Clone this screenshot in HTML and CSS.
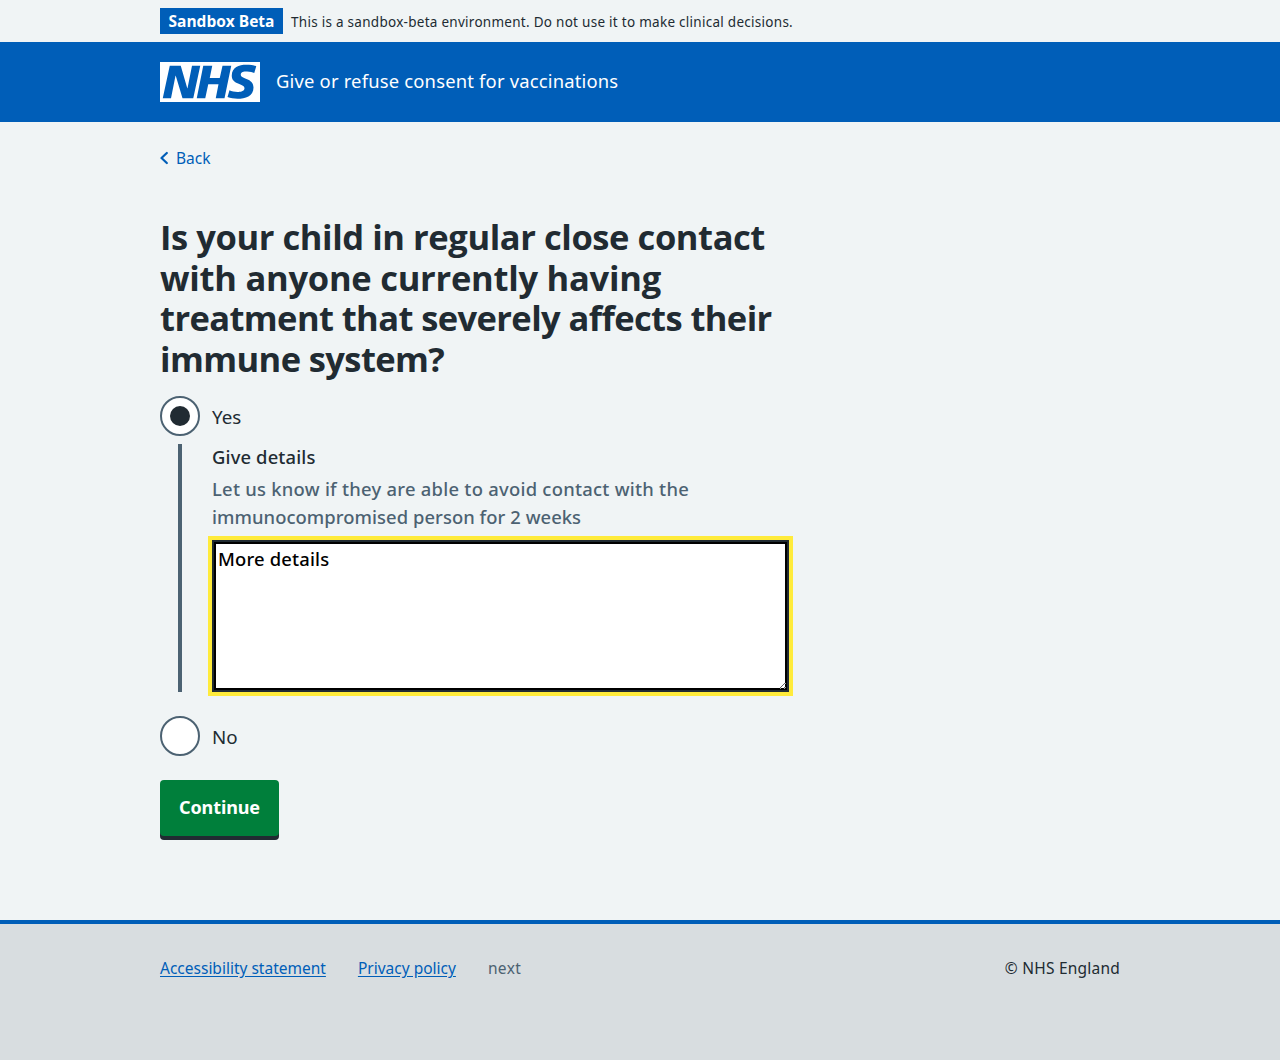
FILE: index.html
```html
<!DOCTYPE html>
<html lang="en">
<head>
<meta charset="utf-8">
<title>Give or refuse consent for vaccinations</title>
<link rel="stylesheet" href="styles.css">
</head>
<body>
<div class="environment">
  <div class="container environment-row">
    <strong class="tag">Sandbox Beta</strong>
    <span class="environment-text">This is a sandbox-beta environment. Do not use it to make clinical decisions.</span>
  </div>
</div>
<header class="header">
  <div class="container header-row">
    <svg class="logo" viewBox="0 0 40 16" role="img" aria-label="NHS"><path fill="#fff" d="M0 0h40v16H0z"/><path fill="#005eb8" d="M3.9 1.5h4.4l2.6 9h.1l1.8-9h3.3l-2.8 13H9l-2.7-9h-.1l-1.8 9H1.1M17.3 1.5h3.6l-1 4.9h4L25 1.5h3.5l-2.7 13h-3.5l1.1-5.6h-4.1l-1.2 5.6h-3.4M37.7 4.4c-.7-.3-1.6-.6-2.9-.6-1.4 0-2.5.2-2.5 1.3 0 1.8 5.1 1.2 5.1 5.1 0 3.6-3.3 4.5-6.4 4.5-1.3 0-2.9-.3-4-.7l.8-2.7c.7.4 2.1.7 3.2.7s2.8-.2 2.8-1.5c0-2.1-5.1-1.3-5.1-5 0-3.4 2.9-4.4 5.8-4.4 1.6 0 3.1.2 4 .6"/></svg>
    <span class="service-name">Give or refuse consent for vaccinations</span>
  </div>
</header>
<div class="container page">
  <a class="back"><svg class="back-icon" viewBox="0 0 8 14"><path d="M6.8 2 1.5 7l5.3 5" fill="none" stroke="currentColor" stroke-width="2.2" stroke-linecap="round" stroke-linejoin="round"/></svg><span>Back</span></a>
  <main class="main">
    <h1 class="title">Is your child in regular close contact<br><span class="title-wide">with anyone currently having</span><br><span class="title-tight">treatment that severely affects their<br>immune system?</span></h1>
    <div class="radio"><span class="radio-circle radio-checked"></span><span class="radio-label">Yes</span></div>
    <div class="conditional">
      <label class="details-label" for="details">Give details</label>
      <div class="hint"><span class="hint-first">Let us know if they are able to avoid contact with the</span><br>immunocompromised person for 2 weeks</div>
      <textarea class="textarea" id="details" spellcheck="false">More details</textarea>
    </div>
    <div class="radio"><span class="radio-circle"></span><span class="radio-label">No</span></div>
    <button class="button" type="button">Continue</button>
  </main>
</div>
<footer class="footer">
  <div class="container footer-row">
    <a class="footer-link">Accessibility statement</a>
    <a class="footer-link">Privacy policy</a>
    <span class="footer-next">next</span>
    <span class="copyright">© NHS England</span>
  </div>
</footer>
</body>
</html>
```
FILE: styles.css
```css
* { box-sizing: border-box; }
body {
  margin: 0;
  min-height: 1060px;
  display: flex;
  flex-direction: column;
  background: #f0f4f5;
  color: #212b32;
  font-family: "Noto Sans", "Open Sans", sans-serif;
  font-size: 18.4px;
  line-height: 28px;
}
.container { width: 960px; margin: 0 auto; }
.environment { height: 42px; padding-top: 8px; }
.environment-row { display: flex; gap: 8px; align-items: center; height: 26px; }
.tag {
  width: 123px; height: 26px;
  background: #005eb8; color: #fff;
  font-family: "Open Sans", "Noto Sans", sans-serif;
  font-size: 15.5px; line-height: 26px; font-weight: 700;
  text-align: center; white-space: nowrap;
}
.environment-text { font-size: 13.5px; letter-spacing: .275px; line-height: 26px; white-space: nowrap; padding-top: 1px; }
.header { background: #005eb8; color: #fff; height: 80px; padding: 20px 0; }
.header-row { display: flex; gap: 16px; height: 40px; }
.logo { width: 100px; height: 40px; }
.service-name { line-height: 38px; letter-spacing: .19px; white-space: nowrap; }
.page { height: 798px; padding-top: 24px; }
.back { display: flex; gap: 8px; align-items: center; height: 24px; color: #005eb8; font-size: 15.5px; line-height: 24px; }
.back-icon { width: 8px; height: 14px; }
.main { width: 629px; padding-top: 47px; }
.title {
  margin: 0 0 17px; height: 162px;
  font-family: "Open Sans", "Noto Sans", sans-serif;
  font-size: 34.5px; line-height: 40.6px; font-weight: 700; letter-spacing: -.42px; white-space: nowrap;
}
.title-wide { letter-spacing: -.25px; }
.title-tight { letter-spacing: -.6px; }
.radio { display: flex; gap: 12px; height: 40px; }
.radio-circle {
  width: 40px; height: 40px; border: 2px solid #4c6272; border-radius: 50%;
  background: #fff; display: flex; align-items: center; justify-content: center;
}
.radio-checked::after { content: ""; width: 20px; height: 20px; border-radius: 50%; background: #212b32; }
.radio-label { line-height: 42px; font-size: 18.8px; }
.conditional {
  margin: 8px 0 24px 18px; padding-left: 30px; height: 248px;
  border-left: 4px solid #4c6272; font-weight: 500;
}
.details-label { display: block; height: 28px; line-height: 26px; margin-bottom: 3px; letter-spacing: .15px; }
.hint { color: #4c6272; height: 56px; margin-bottom: 9px; letter-spacing: .06px; white-space: nowrap; }
.hint-first { letter-spacing: .26px; }
.textarea {
  display: block; width: 577px; height: 152px; margin: 0; padding: 3px 4px 4px;
  border: 2px solid #212b32; border-radius: 0;
  box-shadow: inset 0 0 0 2px #000; outline: 4px solid #ffeb3b;
  background: #fff; color: #000; font: inherit; letter-spacing: .17px; resize: both;
}
.button {
  display: block; width: 119px; height: 56px; margin: 24px 0 0; padding: 0 0 3px;
  border: 0; border-radius: 4px; background: #007f3b; color: #fff;
  box-shadow: 0 4px 0 #212b32; font: inherit; font-size: 18px; font-weight: 700; letter-spacing: -.1px;
}
.footer { flex: 1; border-top: 4px solid #005eb8; background: #d8dde0; padding-top: 32px; }
.footer-row { display: flex; font-size: 15.5px; line-height: 24px; white-space: nowrap; }
.footer-link { color: #005eb8; text-decoration: underline; text-underline-offset: 2px; margin-right: 32px; }
.footer-next { color: #4c6272; letter-spacing: .4px; }
.copyright { margin-left: auto; letter-spacing: .22px; }
```
